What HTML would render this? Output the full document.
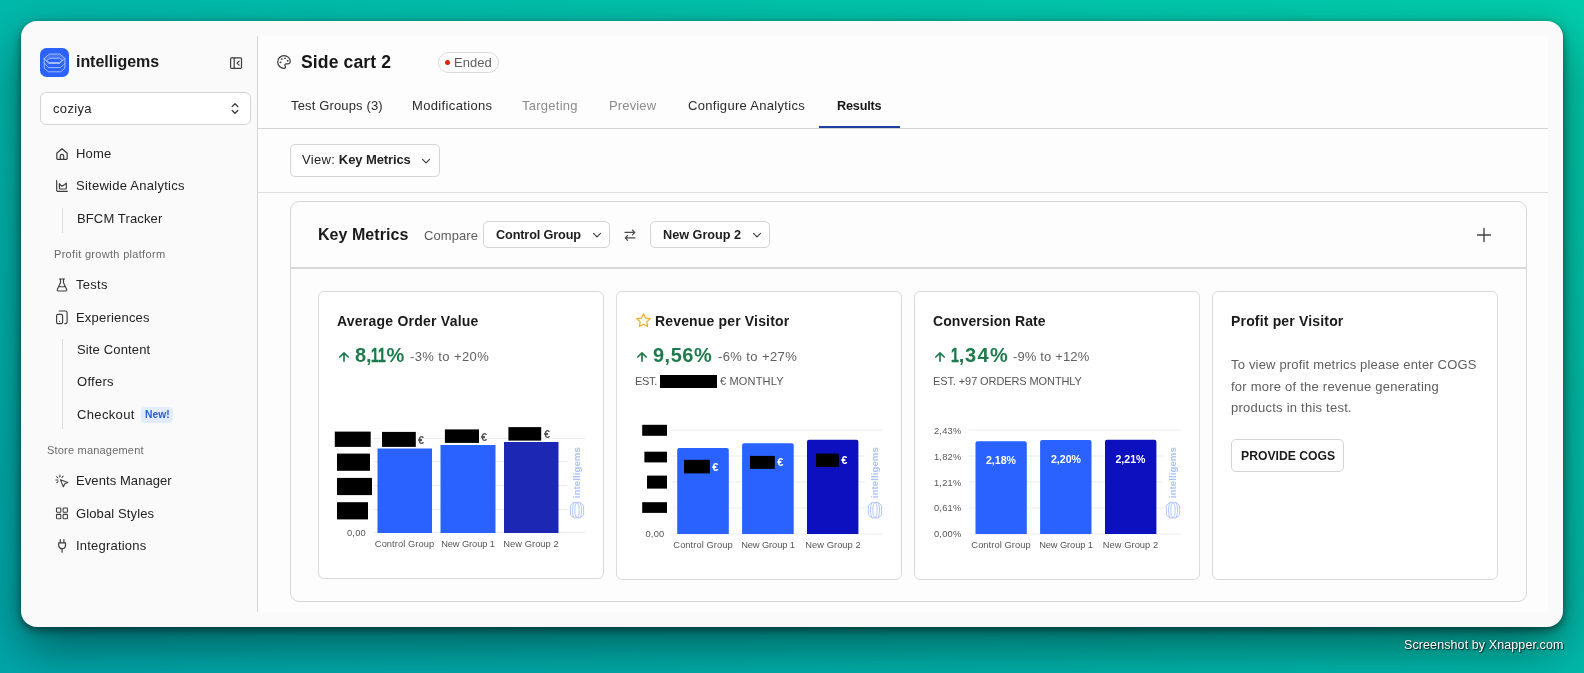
<!DOCTYPE html>
<html lang="en">
<head>
<meta charset="utf-8">
<title>Side cart 2 - Results</title>
<style>
*{box-sizing:border-box;margin:0;padding:0}
html,body{width:1584px;height:673px;overflow:hidden}
body{font-family:"Liberation Sans",sans-serif;color:#1c1c1c;position:relative;
background:linear-gradient(to bottom left,#00cdac 0%,#00a6aa 100%);}
.abs,.t{position:absolute}
.t{white-space:nowrap;line-height:1;will-change:transform}
#win{position:absolute;left:21px;top:21px;width:1542px;height:606px;border-radius:16px;background:#fafafa;
box-shadow:0 20px 50px rgba(0,0,0,.46),0 3px 8px rgba(0,0,0,.5);}
#main{position:absolute;left:258px;top:36px;width:1290px;height:576px;background:#fdfdfd}
#sbline{position:absolute;left:257px;top:36px;width:1px;height:576px;background:#d6d6d6}
.hl{position:absolute;height:1px;background:#d4d4d4}
.nav{font-size:13px;color:#222;letter-spacing:.35px}
.sec{font-size:11px;color:#6a6a6a;letter-spacing:.2px}
.ico{position:absolute;fill:none;stroke:#3c3c3c;stroke-width:1.6;stroke-linecap:round;stroke-linejoin:round}
.box{position:absolute;background:#fff;border:1px solid #d4d4d4}
.tab{font-size:13px;color:#2a2a2a;letter-spacing:.3px}
.tab.dim{color:#8c8c8c}
.card{position:absolute;top:291px;width:286px;height:288px;background:#fff;border:1px solid #d9d9d9;border-radius:6px}
.ct{font-size:14px;font-weight:bold;color:#1a1a1a;letter-spacing:.1px}
.gv{font-size:20px;font-weight:bold;color:#1f7a4d;letter-spacing:-.2px}
.sq{display:inline-block;transform-origin:0 50%;white-space:nowrap;-webkit-text-stroke:.55px #1f7a4d}
.rng{font-size:13px;color:#616161;letter-spacing:.4px}
.para{font-size:13px;color:#5e5e5e;letter-spacing:.3px}
.est{font-size:11px;color:#555;letter-spacing:.35px}
svg text{font-family:"Liberation Sans",sans-serif}
</style>
</head>
<body>
<div id="win"></div>
<div id="main"></div>
<div id="sbline"></div>

<!-- SIDEBAR -->
<div id="sidebar">
<svg class="abs" style="left:40px;top:48px" width="29" height="29" viewBox="0 0 29 29">
<rect width="29" height="29" rx="6.5" fill="#2b62fa"/>
<g fill="none" stroke="#c9d7ff" stroke-width=".75" stroke-linejoin="round" stroke-linecap="round">
<path d="M4.200 10.400L9.300 6h10.500l5.100 4.400-5.100 5.100H9.300z" fill="rgba(255,255,255,.13)"/>
<path d="M6.800 12.500l2.700-2.200h10.100l2.700 2.200-2.700 2H9.500z" fill="#2b62fa"/>
<path d="M4.200 10.400v9.800l4.200 3.600h12.300l4.200-3.700V10.400"/>
<path d="M4.200 14.800l4.200 4.800h12.300l4.200-4.300"/>
</g>
</svg>
<div class="t" id="brand" style="left:76px;top:54px;font-size:16px;font-weight:bold;color:#1a1a1a;letter-spacing:-.05px">intelligems</div>
<svg class="ico" style="left:229px;top:56px;stroke-width:1.2" width="14" height="14" viewBox="0 0 14 14"><rect x="1.600" y="1.800" width="10.900" height="10.600" rx="1.200"/><path d="M5.200 1.800v10.600M10.100 5.100L8 7.100l2.100 2"/></svg>

<div class="box" style="left:40px;top:92px;width:211px;height:33px;border-radius:6px"></div>
<div class="t nav" style="left:53px;top:102px">coziya</div>
<svg class="ico" style="left:230px;top:101.400px;stroke-width:1.300" width="10" height="15" viewBox="0 0 10 15"><path d="M2.200 5.500L5 2.800l2.800 2.700M2.200 9.500L5 12.200l2.800-2.700"/></svg>

<!-- NAV -->
<svg class="ico" style="left:55px;top:146.600px;stroke-width:1.200" width="14" height="14" viewBox="0 0 14 14"><path d="M1.800 6.200L7 1.700l5.200 4.500v5a1.200 1.200 0 0 1-1.200 1.200H3a1.200 1.200 0 0 1-1.200-1.200z"/><path d="M5.300 12.400V9a1.700 1.700 0 0 1 3.400 0v3.400"/></svg>
<div class="t nav" style="left:76px;top:147px;letter-spacing:0.15px">Home</div>

<svg class="ico" style="left:55px;top:179px;stroke-width:1.200" width="14" height="14" viewBox="0 0 14 14"><path d="M1.700 1.700v9.600a1 1 0 0 0 1 1h9.600"/><path d="M4.400 4.700l2.300 2.500 2.100-1.100 2.500-2v5a.9.900 0 0 1-.9.900H5.300a.9.900 0 0 1-.9-.9z"/></svg>
<div class="t nav" style="left:76px;top:179px;letter-spacing:0.26px">Sitewide Analytics</div>

<div class="abs" style="left:62px;top:208px;width:1px;height:25px;background:#dcdcdc"></div>
<div class="t nav" style="left:77px;top:212px;letter-spacing:0.13px">BFCM Tracker</div>

<div class="t sec" style="left:54px;top:249px;letter-spacing:.31px">Profit growth platform</div>

<svg class="ico" style="left:55px;top:277px;stroke-width:1.150" width="14" height="16" viewBox="0 0 14 16"><path d="M4.400 2h5.200M5.500 2v3.700L2.300 12.500a1 1 0 0 0 .9 1.500h7.600a1 1 0 0 0 .9-1.500L8.500 5.700V2M3.800 9.700h6.400"/></svg>
<div class="t nav" style="left:76px;top:278px;letter-spacing:0.26px">Tests</div>

<svg class="ico" style="left:55px;top:309px;stroke-width:1.150" width="14" height="16" viewBox="0 0 14 16"><path d="M4.200 2h6.200a1.700 1.700 0 0 1 1.700 1.700v9.200a1.700 1.700 0 0 1-1.700 1.700H9.800"/><rect x="1.600" y="5.300" width="6" height="9.300" rx="1.400"/><path d="M4.600 12.300v.1"/></svg>
<div class="t nav" style="left:76px;top:311px;letter-spacing:0.2px">Experiences</div>

<div class="abs" style="left:62px;top:339px;width:1px;height:90px;background:#dcdcdc"></div>
<div class="t nav" style="left:77px;top:343px;letter-spacing:0.15px">Site Content</div>
<div class="t nav" style="left:77px;top:375px;letter-spacing:0.28px">Offers</div>
<div class="t nav" style="left:77px;top:408px">Checkout</div>
<div class="abs" style="left:141px;top:407px;width:32px;height:16px;border-radius:4px;background:#e3ecff"></div>
<div class="t" style="left:145px;top:410px;font-size:10.300px;font-weight:bold;color:#2a5bd7;letter-spacing:0">New!</div>

<div class="t sec" style="left:47px;top:445px">Store management</div>

<svg class="ico" style="left:55px;top:474px;stroke-width:1.050" width="14" height="14" viewBox="0 0 14 14"><path d="M5.400 5.700l7.500 2.700-3.100 1.300-1.400 3.100z"/><path d="M4.900 1.100v2M1.500 2.500l1.500 1.500M.9 6h1.900M1.700 8.800l1.400-1.400M8.100 2.100L7 3.400"/></svg>
<div class="t nav" style="left:76px;top:474px;letter-spacing:0.08px">Events Manager</div>

<svg class="ico" style="left:55px;top:506px;stroke-width:1.050" width="14" height="14" viewBox="0 0 14 14"><rect x="1.500" y="1.900" width="4.300" height="4.300" rx=".7"/><rect x="8.100" y="1.900" width="4.300" height="4.300" rx=".7"/><rect x="1.500" y="8.400" width="4.300" height="4.300" rx=".7"/><rect x="8.100" y="8.400" width="4.300" height="4.300" rx=".7"/></svg>
<div class="t nav" style="left:76px;top:507px;letter-spacing:0.12px">Global Styles</div>

<svg class="ico" style="left:55px;top:538px;stroke-width:1.200" width="14" height="16" viewBox="0 0 14 16"><path d="M5.300 1.600v3.200M8.900 1.600v3.200M3.700 4.800h6.800v2.500a3.400 3.400 0 0 1-6.800 0zM7.100 10.700v3.500"/></svg>
<div class="t nav" style="left:76px;top:539px;letter-spacing:0.21px">Integrations</div>
</div>

<!-- MAIN HEADER -->
<svg class="ico" style="left:276px;top:54px;stroke-width:1.200" width="16" height="16" viewBox="0 0 16 16"><path d="M8 1.700a6.300 6.300 0 1 0 0 12.600c1 0 1.500-.7 1.500-1.400 0-.5-.2-.8-.4-1.100-.6-.9 0-2 1.100-2h1.700a2.400 2.400 0 0 0 2.400-2.400C14.300 4.300 11.500 1.700 8 1.700z"/><circle cx="4.400" cy="8.300" r=".6" fill="#3c3c3c" stroke-width=".5"/><circle cx="5.600" cy="5.100" r=".6" fill="#3c3c3c" stroke-width=".5"/><circle cx="8.900" cy="4.300" r=".6" fill="#3c3c3c" stroke-width=".5"/><circle cx="11.600" cy="6.800" r=".6" fill="#3c3c3c" stroke-width=".5"/></svg>
<div class="t" id="title" style="left:301px;top:54px;font-size:17.600px;font-weight:bold;color:#171717;letter-spacing:.1px">Side cart 2</div>
<div class="box" style="left:438px;top:52px;width:61px;height:21px;border-radius:11px;border-color:#d9d9d9"></div>
<div class="abs" style="left:445px;top:60px;width:5px;height:5px;border-radius:50%;background:#e0210b"></div>
<div class="t" style="left:454px;top:56px;font-size:13px;color:#5e5e5e;letter-spacing:.06px">Ended</div>

<div class="t tab" style="left:291px;top:99px;letter-spacing:.15px">Test Groups (3)</div>
<div class="t tab" style="left:412.300px;top:99px;letter-spacing:.35px">Modifications</div>
<div class="t tab dim" style="left:522px;top:99px;letter-spacing:.25px">Targeting</div>
<div class="t tab dim" style="left:609px;top:99px;letter-spacing:.14px">Preview</div>
<div class="t tab" style="left:687.500px;top:99px">Configure Analytics</div>
<div class="t tab" style="left:837px;top:99.800px;font-size:12.700px;font-weight:bold;color:#161616;letter-spacing:-.2px">Results</div>
<div class="hl" style="left:258px;top:128px;width:1290px"></div>
<div class="abs" style="left:819px;top:126px;width:81px;height:2px;background:#1f3f9e"></div>

<div class="box" style="left:290px;top:144px;width:150px;height:33px;border-radius:5px"></div>
<div class="t" style="left:302px;top:153px;font-size:13px;color:#222;letter-spacing:.3px">View:<b style="letter-spacing:-.1px;margin-left:3.800px">Key Metrics</b></div>
<svg class="ico" style="left:420px;top:155px;stroke-width:1.200" width="12" height="12" viewBox="0 0 12 12"><path d="M2.500 4.300L6 7.800l3.500-3.500"/></svg>
<div class="hl" style="left:258px;top:192px;width:1290px;background:#dedede"></div>

<!-- KEY METRICS PANEL -->
<div class="box" style="left:290px;top:201px;width:1237px;height:401px;border-radius:9px;background:#fdfdfd;border-color:#d6d6d6"></div>
<div class="abs" style="left:291px;top:267px;width:1235px;height:2px;background:#d9d9d9"></div>
<div class="t" id="km" style="left:317.500px;top:227px;font-size:16px;font-weight:bold;color:#1a1a1a;letter-spacing:.05px">Key Metrics</div>
<div class="t" style="left:424px;top:229px;font-size:13px;color:#5c5c5c;letter-spacing:.07px">Compare</div>
<div class="box" style="left:483px;top:221px;width:127px;height:27px;border-radius:5px"></div>
<div class="t" style="left:496px;top:228.800px;font-size:12.700px;font-weight:bold;color:#1c1c1c;letter-spacing:-.14px">Control Group</div>
<svg class="ico" style="left:591px;top:229px;stroke-width:1.200" width="12" height="12" viewBox="0 0 12 12"><path d="M2.500 4.300L6 7.800l3.500-3.500"/></svg>
<svg class="ico" style="left:623px;top:228px;stroke-width:1.150;stroke:#4a4a4a" width="14" height="14" viewBox="0 0 14 14"><path d="M2 4.400h9.800M9.400 2l2.400 2.400-2.400 2.400M12 9.900H2.200M4.600 7.500L2.200 9.900l2.400 2.400"/></svg>
<div class="box" style="left:650px;top:221px;width:120px;height:27px;border-radius:5px"></div>
<div class="t" style="left:662.500px;top:228.800px;font-size:12.700px;font-weight:bold;color:#1c1c1c;letter-spacing:-.02px">New Group 2</div>
<svg class="ico" style="left:751px;top:229px;stroke-width:1.200" width="12" height="12" viewBox="0 0 12 12"><path d="M2.500 4.300L6 7.800l3.500-3.500"/></svg>
<svg class="ico" style="left:1476px;top:227px;stroke-width:1.400;stroke:#444" width="16" height="16" viewBox="0 0 16 16"><path d="M8 1.500v13M1.500 8h13"/></svg>

<!-- CARDS -->
<div class="card" style="left:318px"></div>
<div class="card" style="left:616px;height:289px"></div>
<div class="card" style="left:914px;height:289px"></div>
<div class="card" style="left:1212px;height:289px"></div>

<div class="t ct" style="left:337px;top:314px;letter-spacing:.23px">Average Order Value</div>
<svg class="ico" style="left:337px;top:349px;stroke:#1f7a4d;stroke-width:1.700" width="14" height="14" viewBox="0 0 14 14"><path d="M7 12.100V4M2.800 8L7 3.800l4.200 4.200"/></svg>
<div class="t gv" style="left:354.700px;top:345px;letter-spacing:0">8,<span class="sq" style="transform:scaleX(.69);width:15.500px;margin-left:-.8px">11</span>%</div>
<div class="t rng" style="left:409.500px;top:350px">-3% to +20%</div>

<svg class="abs" style="left:634.700px;top:312px" width="17" height="17" viewBox="0 0 17 17"><path d="M8.500 1.900l2.050 4.150 4.550.65-3.300 3.200.8 4.550-4.100-2.150-4.100 2.150.8-4.550-3.300-3.200 4.550-.65z" fill="none" stroke="#f2ae27" stroke-width="1.250" stroke-linejoin="round"/></svg>
<div class="t ct" style="left:654.500px;top:314px;letter-spacing:.16px">Revenue per Visitor</div>
<svg class="ico" style="left:635px;top:349px;stroke:#1f7a4d;stroke-width:1.700" width="14" height="14" viewBox="0 0 14 14"><path d="M7 12.100V4M2.800 8L7 3.800l4.200 4.200"/></svg>
<div class="t gv" style="left:652.500px;top:345px;letter-spacing:.5px">9,56%</div>
<div class="t rng" style="left:717.500px;top:350px">-6% to +27%</div>
<div class="t est" style="left:635px;top:375.500px;letter-spacing:-.3px">EST.</div>
<div class="abs" style="left:660px;top:375px;width:57px;height:13px;background:#000"></div>
<div class="t est" style="left:720px;top:375.500px;letter-spacing:.17px">€ MONTHLY</div>

<div class="t ct" style="left:933px;top:314px;letter-spacing:.1px">Conversion Rate</div>
<svg class="ico" style="left:933px;top:349px;stroke:#1f7a4d;stroke-width:1.700" width="14" height="14" viewBox="0 0 14 14"><path d="M7 12.100V4M2.800 8L7 3.800l4.200 4.200"/></svg>
<div class="t gv" style="left:950.700px;top:345px;letter-spacing:0"><span class="sq" style="transform:scaleX(.7);width:7.640px">1</span>,<span style="letter-spacing:1.400px;margin-left:.7px">34</span>%</div>
<div class="t rng" style="left:1013px;top:350px;letter-spacing:.15px">-9% to +12%</div>
<div class="t est" style="left:933px;top:375.500px;letter-spacing:-.1px">EST. +97 ORDERS MONTHLY</div>

<div class="t ct" style="left:1231px;top:314px;letter-spacing:.17px">Profit per Visitor</div>
<div class="t para" style="left:1231px;top:358px;letter-spacing:.18px">To view profit metrics please enter COGS</div>
<div class="t para" style="left:1231px;top:379.500px;letter-spacing:.23px">for more of the revenue generating</div>
<div class="t para" style="left:1231px;top:401px;letter-spacing:.24px">products in this test.</div>
<div class="box" style="left:1231px;top:439px;width:113px;height:33px;border-radius:5px"></div>
<div class="t" style="left:1240.500px;top:449.700px;font-size:12.200px;font-weight:bold;color:#1a1a1a;letter-spacing:0">PROVIDE COGS</div>

<!-- CHARTS -->
<svg class="abs" style="left:0;top:0" width="1584" height="673" viewBox="0 0 1584 673"><path d="M373 438.5H585" stroke="#ececec" stroke-width="1"/><path d="M373 461.5H567" stroke="#ececec" stroke-width="1"/><path d="M373 485.5H567" stroke="#ececec" stroke-width="1"/><path d="M373 509.5H567" stroke="#ececec" stroke-width="1"/><path d="M373 532.5H585" stroke="#ececec" stroke-width="1"/><rect x="377.500" y="448.500" width="54.500" height="84.500" fill="#2962ff"/><rect x="440.500" y="445" width="55" height="88" fill="#2962ff"/><rect x="504" y="442" width="54.500" height="91" fill="#1c28b4"/><rect x="334.8" y="431.6" width="35.9" height="15.3" fill="#000"/><rect x="337" y="453.6" width="33" height="17.2" fill="#000"/><rect x="337" y="477.9" width="35" height="17.2" fill="#000"/><rect x="337" y="502.2" width="31" height="17.2" fill="#000"/><text x="347" y="536" font-size="9.300" fill="#555" letter-spacing=".2">0,00</text><rect x="382" y="431.9" width="33.8" height="15.0" fill="#000"/><rect x="444.9" y="429.4" width="34.1" height="13.5" fill="#000"/><rect x="508.4" y="427.1" width="32.8" height="13.5" fill="#000"/><text x="418" y="444" font-size="11" font-weight="bold" fill="#555">€</text><text x="481" y="441" font-size="11" font-weight="bold" fill="#555">€</text><text x="544" y="438" font-size="11" font-weight="bold" fill="#555">€</text><text x="404.5" y="547" text-anchor="middle" font-size="9.300" fill="#555" letter-spacing=".07">Control Group</text><text x="468" y="547" text-anchor="middle" font-size="9.300" fill="#555" letter-spacing="-.1">New Group 1</text><text x="531" y="547" text-anchor="middle" font-size="9.300" fill="#555" letter-spacing=".05">New Group 2</text><text transform="translate(580.2,498.300) rotate(-90)" font-size="9.600" font-weight="bold" fill="#acc1ff" letter-spacing=".1">intelligems</text><g fill="none" stroke="#acc1ff" stroke-width=".9"><path d="M574 502.400h6l3.600 3v9.500l-3.600 3h-6l-3.600-3v-9.500z" stroke-linejoin="round"/><ellipse cx="577" cy="510.150" rx="2.200" ry="7.700"/><path d="M574 502.600c-2 3.500-2 11.600 0 15.100M580 502.600c2 3.500 2 11.600 0 15.100"/></g><path d="M671 430H883" stroke="#ececec" stroke-width="1"/><path d="M671 456H865" stroke="#ececec" stroke-width="1"/><path d="M671 482H865" stroke="#ececec" stroke-width="1"/><path d="M671 508H865" stroke="#ececec" stroke-width="1"/><path d="M671 534H883" stroke="#ececec" stroke-width="1"/><path d="M677.2 534V450a2 2 0 0 1 2-2H726.8a2 2 0 0 1 2 2V534z" fill="#2962ff"/><path d="M742.1 534V445.2a2 2 0 0 1 2-2H791.7a2 2 0 0 1 2 2V534z" fill="#2962ff"/><path d="M807 534V441.8a2 2 0 0 1 2-2H856.4a2 2 0 0 1 2 2V534z" fill="#0c10bf"/><rect x="642.2" y="424.8" width="24.8" height="11.0" fill="#000"/><rect x="644.4" y="451.7" width="22.6" height="10.7" fill="#000"/><rect x="647" y="475.6" width="20" height="13.0" fill="#000"/><rect x="642.2" y="502.2" width="24.8" height="10.7" fill="#000"/><text x="645.500" y="537" font-size="9.300" fill="#555" letter-spacing=".2">0,00</text><rect x="684" y="459.8" width="25.9" height="13.6" fill="#000"/><rect x="750" y="455.9" width="24.8" height="13.0" fill="#000"/><rect x="816" y="453.6" width="22.9" height="13.3" fill="#000"/><text x="712.3" y="471" font-size="11" font-weight="bold" fill="#fff">€</text><text x="777.3" y="466" font-size="11" font-weight="bold" fill="#fff">€</text><text x="841.3" y="463.5" font-size="11" font-weight="bold" fill="#fff">€</text><text x="703" y="548" text-anchor="middle" font-size="9.300" fill="#555" letter-spacing=".07">Control Group</text><text x="768" y="548" text-anchor="middle" font-size="9.300" fill="#555" letter-spacing="-.1">New Group 1</text><text x="833" y="548" text-anchor="middle" font-size="9.300" fill="#555" letter-spacing=".05">New Group 2</text><text transform="translate(878.2,498.300) rotate(-90)" font-size="9.600" font-weight="bold" fill="#acc1ff" letter-spacing=".1">intelligems</text><g fill="none" stroke="#acc1ff" stroke-width=".9"><path d="M872 502.400h6l3.600 3v9.500l-3.600 3h-6l-3.600-3v-9.500z" stroke-linejoin="round"/><ellipse cx="875" cy="510.150" rx="2.200" ry="7.700"/><path d="M872 502.600c-2 3.500-2 11.600 0 15.100M878 502.600c2 3.500 2 11.600 0 15.100"/></g><path d="M969 430H1181" stroke="#ececec" stroke-width="1"/><path d="M969 456H1163" stroke="#ececec" stroke-width="1"/><path d="M969 482H1163" stroke="#ececec" stroke-width="1"/><path d="M969 508H1163" stroke="#ececec" stroke-width="1"/><path d="M969 534H1181" stroke="#ececec" stroke-width="1"/><path d="M975.5 534V443.2a2 2 0 0 1 2-2H1024.8a2 2 0 0 1 2 2V534z" fill="#2962ff"/><path d="M1040.1 534V442.1a2 2 0 0 1 2-2H1089.5a2 2 0 0 1 2 2V534z" fill="#2962ff"/><path d="M1105 534V441.8a2 2 0 0 1 2-2H1154.4a2 2 0 0 1 2 2V534z" fill="#0c10bf"/><text x="961.500" y="434" text-anchor="end" font-size="9.300" fill="#555" letter-spacing=".25">2,43%</text><text x="961.500" y="460" text-anchor="end" font-size="9.300" fill="#555" letter-spacing=".25">1,82%</text><text x="961.500" y="485.5" text-anchor="end" font-size="9.300" fill="#555" letter-spacing=".25">1,21%</text><text x="961.500" y="511" text-anchor="end" font-size="9.300" fill="#555" letter-spacing=".25">0,61%</text><text x="961.500" y="537" text-anchor="end" font-size="9.300" fill="#555" letter-spacing=".25">0,00%</text><text x="1001" y="464" text-anchor="middle" font-size="10.600" font-weight="bold" fill="#fff" letter-spacing="0">2,18%</text><text x="1066" y="463" text-anchor="middle" font-size="10.600" font-weight="bold" fill="#fff" letter-spacing="0">2,20%</text><text x="1130.5" y="463" text-anchor="middle" font-size="10.600" font-weight="bold" fill="#fff" letter-spacing="0">2,21%</text><text x="1001" y="548" text-anchor="middle" font-size="9.300" fill="#555" letter-spacing=".07">Control Group</text><text x="1066" y="548" text-anchor="middle" font-size="9.300" fill="#555" letter-spacing="-.1">New Group 1</text><text x="1130.5" y="548" text-anchor="middle" font-size="9.300" fill="#555" letter-spacing=".05">New Group 2</text><text transform="translate(1176.2,498.300) rotate(-90)" font-size="9.600" font-weight="bold" fill="#acc1ff" letter-spacing=".1">intelligems</text><g fill="none" stroke="#acc1ff" stroke-width=".9"><path d="M1170 502.400h6l3.600 3v9.500l-3.600 3h-6l-3.600-3v-9.500z" stroke-linejoin="round"/><ellipse cx="1173" cy="510.150" rx="2.200" ry="7.700"/><path d="M1170 502.600c-2 3.500-2 11.600 0 15.100M1176 502.600c2 3.500 2 11.600 0 15.100"/></g></svg>

<div class="t" id="xn" style="left:1404px;top:639px;font-size:12.500px;color:#fff;text-shadow:1px 1px 1px rgba(0,0,0,.75),0 0 2px rgba(0,0,0,.45);letter-spacing:.1px">Screenshot by Xnapper.com</div>

</body>
</html>
